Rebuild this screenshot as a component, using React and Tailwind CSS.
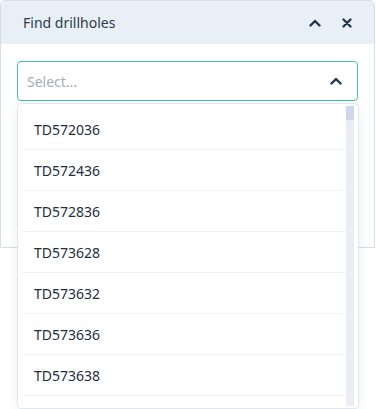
import { useState } from 'react';

const holes = ['TD572036', 'TD572436', 'TD572836', 'TD573628', 'TD573632', 'TD573636', 'TD573638'];

const ChevronUp = ({ className }) => (
    <svg viewBox="0 0 12 8" className={className} fill="none" stroke="currentColor" strokeWidth="2.4" strokeLinecap="round" strokeLinejoin="round">
        <path d="M1.5 6.5 6 2l4.5 4.5" />
    </svg>
);

const Close = ({ className }) => (
    <svg viewBox="0 0 10 10" className={className} fill="none" stroke="currentColor" strokeWidth="2.3" strokeLinecap="round">
        <path d="M1.5 1.5l7 7M8.5 1.5l-7 7" />
    </svg>
);

const App = () => {
    const [open, setOpen] = useState(true);

    return (
        <div className="w-[376px] h-[409px] bg-white overflow-hidden" style={{ fontFamily: '"Noto Sans", "Open Sans", sans-serif' }}>
            <div className="relative w-[375px] h-[248px] border border-[#d3deeb] rounded-t-[5px] bg-white">
                {/* header */}
                <div className="flex items-center h-[43px] bg-[#e9eff6] pl-[22px] pr-[22px] rounded-t-[4px]">
                    <span className="flex-1 text-[14px] text-[#2d3b4c]">Find drillholes</span>
                    <ChevronUp className="w-[12px] h-[8px] text-[#1f3450] mr-[21px]" />
                    <Close className="w-[10px] h-[10px] text-[#1f3450]" />
                </div>

                {/* body */}
                <div className="px-[16px] pt-[17px]">
                    <div
                        className="flex items-center h-[40px] border border-[#44c2aa] rounded-[4px] pl-[9px] pr-[15px] bg-white cursor-pointer"
                        onClick={() => setOpen(!open)}
                    >
                        <span className="flex-1 text-[14px] text-[#a3adb9]">Select...</span>
                        <ChevronUp className="w-[12px] h-[8px] text-[#1f3450]" />
                    </div>
                </div>

                {/* dropdown menu */}
                {open && (
                    <div className="absolute left-[16px] top-[102px] w-[342px] h-[306px] bg-white border border-[#e3e8ef] rounded-[4px] shadow-[0_2px_12px_rgba(30,50,80,0.08)] py-[2px] pl-[4px] pr-[4px] flex">
                        <ul className="flex-1 h-[300px] overflow-hidden pt-[3px]">
                            {holes.map(h => (
                                <li key={h} className="h-[41px] flex items-center pl-[12px] border-b border-[#eef1f5] text-[14px] text-[#1f2d3d]">
                                    {h}
                                </li>
                            ))}
                        </ul>
                        {/* scrollbar */}
                        <div className="w-[8px] h-[300px] bg-[#eaeef4]">
                            <div className="h-[14px] bg-[#cdd9ea]" />
                        </div>
                    </div>
                )}
            </div>
        </div>
    );
};

export default App;
